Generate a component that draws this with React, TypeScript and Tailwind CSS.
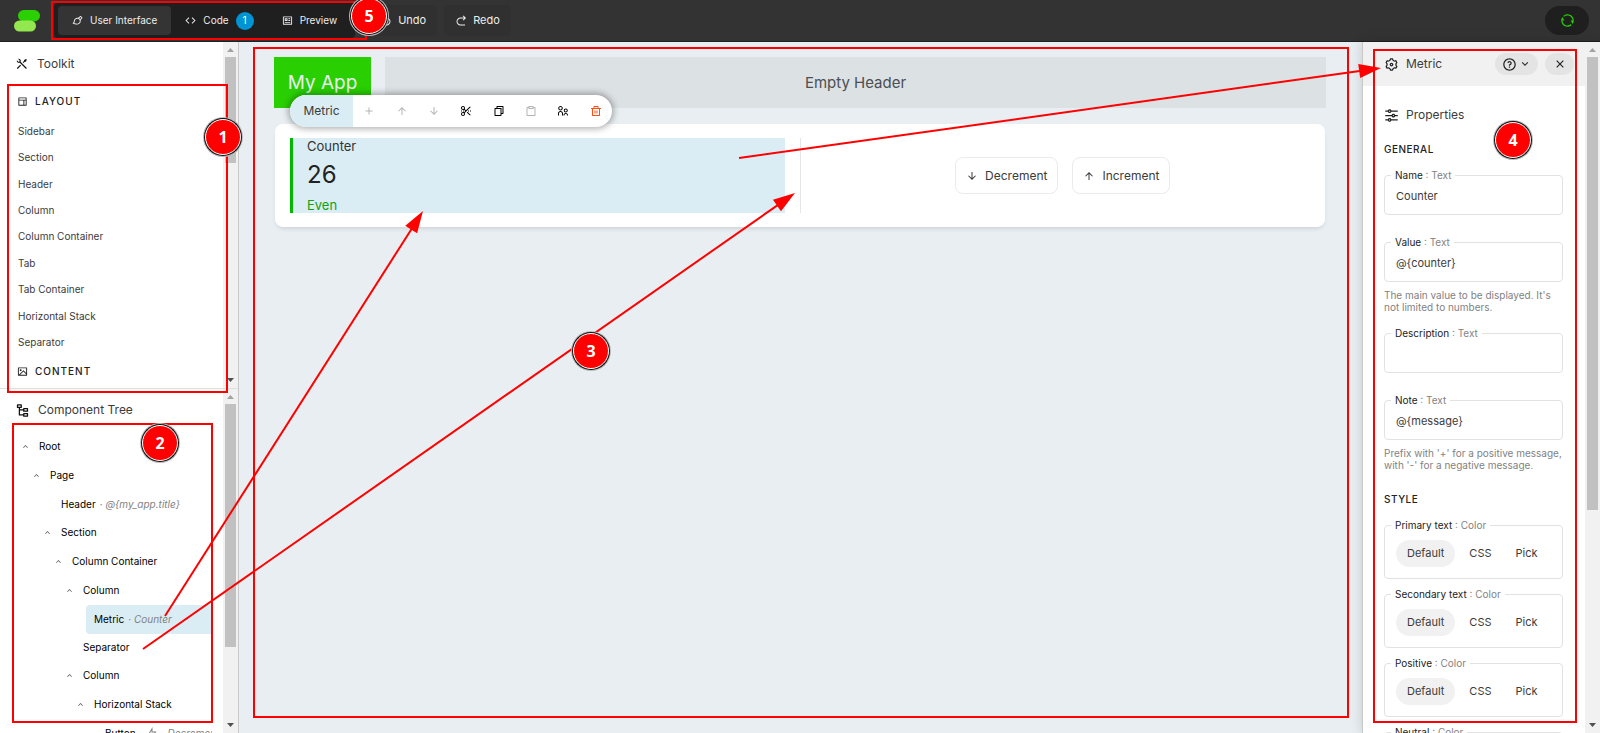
import React from "react";
import type { IconType } from "react-icons";
import {
  RiAddLine,
  RiArrowDownLine,
  RiArrowDownSLine,
  RiArrowGoBackLine,
  RiArrowGoForwardLine,
  RiArrowUpLine,
  RiArrowUpSLine,
  RiBrushLine,
  RiClipboardLine,
  RiCloseLine,
  RiCodeLine,
  RiDeleteBinLine,
  RiEqualizerLine,
  RiFileCopyLine,
  RiFlashlightLine,
  RiImageLine,
  RiLayoutLine,
  RiNodeTree,
  RiParentLine,
  RiProfileLine,
  RiQuestionLine,
  RiRefreshLine,
  RiScissorsCutLine,
  RiSettings3Line,
  RiToolsLine,
} from "react-icons/ri";

const layoutItems = [
  "Sidebar",
  "Section",
  "Header",
  "Column",
  "Column Container",
  "Tab",
  "Tab Container",
  "Horizontal Stack",
  "Separator",
];

type TreeNode = {
  name: string;
  level: number;
  detail?: string;
  leaf?: boolean;
  selected?: boolean;
  event?: boolean;
};

const tree: TreeNode[] = [
  { name: "Root", level: 0 },
  { name: "Page", level: 1 },
  { name: "Header", level: 2, leaf: true, detail: "@{my_app.title}" },
  { name: "Section", level: 2 },
  { name: "Column Container", level: 3 },
  { name: "Column", level: 4 },
  { name: "Metric", level: 5, leaf: true, detail: "Counter", selected: true },
  { name: "Separator", level: 4, leaf: true },
  { name: "Column", level: 4 },
  { name: "Horizontal Stack", level: 5 },
  { name: "Button", level: 6, leaf: true, detail: "Decrement", event: true },
];

function Scrollbar({ thumb }: { thumb: string }) {
  return (
    <div aria-hidden="true" className="flex w-[15px] shrink-0 flex-col items-center bg-[#f1f1f1]">
      <svg viewBox="0 0 15 15" className="size-[15px] shrink-0 fill-[#a3a3a3]">
        <path d="M4 10 7.5 6 11 10Z" />
      </svg>
      <div className="flex min-h-0 w-full flex-1 flex-col items-center">
        <div className={`w-[11px] bg-[#c1c1c1] ${thumb}`} />
      </div>
      <svg viewBox="0 0 15 15" className="size-[15px] shrink-0 fill-[#505050]">
        <path d="M4 5 7.5 9 11 5Z" />
      </svg>
    </div>
  );
}

function Logo() {
  return (
    <svg viewBox="0 0 27 22" className="h-[22px] w-[27px]" aria-label="Logo">
      <rect x="4" y="0" width="22" height="11.5" rx="5.75" fill="#2bd002" />
      <rect x="0" y="10.5" width="22" height="11" rx="5.5" fill="#94e84f" />
    </svg>
  );
}

function TopBar() {
  return (
    <header className="flex h-[42px] shrink-0 items-center border-b border-[#1f1f1f] bg-[#333333] pr-[11px] pl-3.5 text-[11px] text-[#ededed]">
      <Logo />
      <nav className="ml-[13px] flex h-[35px] items-center rounded bg-[#1f1f1f] px-1 text-[10px]">
        <button className="flex h-[29px] items-center gap-[7px] rounded bg-[#343434] px-3.5">
          <RiBrushLine size={11} /> User Interface
        </button>
        <button className="flex h-[29px] items-center gap-[7px] px-3.5">
          <RiCodeLine size={11} /> Code
          <span className="flex size-[18px] items-center justify-center rounded-full bg-[#0094d4] text-white">1</span>
        </button>
        <button className="flex h-[29px] items-center gap-[7px] px-3.5">
          <RiProfileLine size={11} /> Preview
        </button>
      </nav>
      <div className="ml-3.5 flex gap-[7px]">
        <button className="flex h-[31px] items-center gap-1.5 rounded bg-[#303030] px-[11px]">
          <RiArrowGoBackLine size={12} /> Undo
        </button>
        <button className="flex h-[31px] items-center gap-1.5 rounded bg-[#303030] px-[11px]">
          <RiArrowGoForwardLine size={12} /> Redo
        </button>
      </div>
      <button
        aria-label="Sync"
        className="ml-auto flex h-[29px] w-11 items-center justify-center rounded-full bg-[#1f1f1f] text-[#29cf00]"
      >
        <RiRefreshLine size={15} />
      </button>
    </header>
  );
}

function GroupTitle({ icon: Icon, children }: { icon: IconType; children: React.ReactNode }) {
  return (
    <h3 className="flex h-6 items-center gap-[7px] pl-[17px] text-[10px] font-medium tracking-widest text-[#222222]">
      <Icon size={11} /> {children}
    </h3>
  );
}

function Toolkit() {
  return (
    <section className="flex h-[347px] shrink-0 border-b border-[#e0e0e0]">
      <div className="min-w-0 flex-1 overflow-hidden">
        <h2 className="flex h-[47px] items-center gap-2 pb-1 pl-[15px] text-[12px] text-[#3b3b3b]">
          <RiToolsLine size={14} className="text-[#111111]" /> Toolkit
        </h2>
        <GroupTitle icon={RiLayoutLine}>LAYOUT</GroupTitle>
        <ul className="mt-[5px] grid h-[238px] auto-rows-fr text-[10px] text-[#3b3b3b]">
          {layoutItems.map((item) => (
            <li key={item} className="flex items-center pl-[18px]">
              {item}
            </li>
          ))}
        </ul>
        <div className="pt-[3px]">
          <GroupTitle icon={RiImageLine}>CONTENT</GroupTitle>
        </div>
      </div>
      <Scrollbar thumb="h-[106px]" />
    </section>
  );
}

function TreeRow({ node }: { node: TreeNode }) {
  return (
    <li
      className={`flex shrink-0 items-center ${node.leaf ? "h-7" : "h-[29px]"}`}
      style={{ paddingLeft: 19 + node.level * 11 }}
    >
      {!node.leaf && (
        <button aria-label={`Collapse ${node.name}`} className="flex w-5 shrink-0 pl-0.5 text-[#555555]">
          <RiArrowUpSLine size={9} />
        </button>
      )}
      <div
        className={`flex items-center gap-1 whitespace-nowrap ${
          node.selected ? "ml-3 h-[29px] flex-1 rounded-l bg-[#daedf5] pl-2" : node.leaf ? "pl-5" : ""
        }`}
      >
        <span className="text-black">{node.name}</span>
        {node.event && <RiFlashlightLine size={12} className="mx-1.5 shrink-0 text-[#828282]" />}
        {node.detail && (
          <span className="text-[#828282]">
            {!node.event && "· "}
            <em>{node.detail}</em>
          </span>
        )}
      </div>
    </li>
  );
}

function ComponentTree() {
  return (
    <section className="flex min-h-0 flex-1">
      <div className="min-w-0 flex-1 overflow-hidden pr-[11px]">
        <h2 className="flex h-[42px] items-center gap-2 pl-[15px] text-[12px] text-[#3b3b3b]">
          <RiNodeTree size={15} className="text-[#111111]" /> Component Tree
        </h2>
        <ul className="flex flex-col overflow-hidden pt-px text-[10px]">
          {tree.map((node, i) => (
            <TreeRow key={i} node={node} />
          ))}
        </ul>
      </div>
      <Scrollbar thumb="h-[243px]" />
    </section>
  );
}

const shortcuts: { label: string; icon: IconType; tone: string }[] = [
  { label: "Add child", icon: RiAddLine, tone: "text-[#b5b5b5]" },
  { label: "Move up", icon: RiArrowUpLine, tone: "text-[#b5b5b5]" },
  { label: "Move down", icon: RiArrowDownLine, tone: "text-[#b5b5b5]" },
  { label: "Cut", icon: RiScissorsCutLine, tone: "text-black" },
  { label: "Copy", icon: RiFileCopyLine, tone: "text-black" },
  { label: "Paste", icon: RiClipboardLine, tone: "text-[#b5b5b5]" },
  { label: "Go to parent", icon: RiParentLine, tone: "text-black" },
  { label: "Delete", icon: RiDeleteBinLine, tone: "text-[#ff4d12]" },
];

function ComponentToolbar() {
  return (
    <div className="absolute -top-[29px] left-[15px] flex h-8 w-[322px] items-stretch overflow-hidden rounded-full bg-white shadow-[0_0_6px_2px_rgba(0,0,0,0.3)]">
      <span className="flex w-[63px] items-center justify-center bg-[#daedf5] text-[12px] text-[#3b3b3b]">Metric</span>
      {shortcuts.map(({ label, icon: Icon, tone }) => (
        <button key={label} aria-label={label} className={`flex flex-1 items-center justify-center ${tone}`}>
          <Icon size={12} />
        </button>
      ))}
    </div>
  );
}

function Canvas() {
  return (
    <main className="min-w-0 flex-1 bg-[#e8eef1] pt-[15px] pr-9 pl-[35px]">
      <div className="flex h-[51px] gap-3.5">
        <div className="flex w-[97px] items-center justify-center bg-[#29cf00] pt-0.5 text-[19px] text-[#e8eef1]">
          My App
        </div>
        <div className="flex flex-1 items-center justify-center bg-[#dce1e4] pt-0.5 text-[15px] text-[#4b4f52]">
          Empty Header
        </div>
      </div>
      <section className="relative mt-4 mr-px ml-px grid grid-cols-[1fr_1px_1fr] gap-x-[15px] rounded-lg bg-white px-[15px] py-3.5 shadow-[0_3px_5px_-2px_rgba(0,0,0,0.15)]">
        <div className="h-[75px] border-l-[3px] border-[#00b800] bg-[#daedf5] pl-3.5 text-[13px] text-[#333333]">
          <div className="leading-[17px]">Counter</div>
          <div className="pt-1 pb-[7px] text-[24px] leading-[31px] text-[#222222]">26</div>
          <div className="leading-[17px] text-[#12a112]">Even</div>
        </div>
        <div className="bg-[#e6e6e6]" />
        <div className="flex items-center justify-center gap-3.5 text-[12px] text-[#3b3b3b]">
          <button className="flex h-[37px] items-center gap-[7px] rounded-lg border border-[#ebebeb] px-2.5">
            <RiArrowDownLine size={12} /> Decrement
          </button>
          <button className="flex h-[37px] items-center gap-[7px] rounded-lg border border-[#ebebeb] px-2.5">
            <RiArrowUpLine size={12} /> Increment
          </button>
        </div>
        <ComponentToolbar />
      </section>
    </main>
  );
}

function Legend({ name, type }: { name: string; type: string }) {
  return (
    <legend className="ml-1.5 px-1 text-[10px] leading-[14px] whitespace-nowrap text-[#222222]">
      {name} <span className="text-[#828282]">: {type}</span>
    </legend>
  );
}

function TextField({ name, value, hint }: { name: string; value: string; hint?: string }) {
  return (
    <div className={hint ? "mb-[13px]" : "mb-5"}>
      <fieldset className="h-[47px] rounded border border-[#e2e2e2]">
        <Legend name={name} type="Text" />
        <input
          aria-label={name}
          defaultValue={value}
          className="block h-7 w-full bg-transparent px-[11px] text-[#3b3b3b] outline-none"
        />
      </fieldset>
      {hint && <p className="pt-[7px] text-[10px] leading-3 text-[#828282]">{hint}</p>}
    </div>
  );
}

function ColorField({ name }: { name: string }) {
  return (
    <fieldset className="mb-2 h-[61px] rounded border border-[#e2e2e2]">
      <Legend name={name} type="Color" />
      <div className="flex pt-2 pl-[11px] text-[#3b3b3b]">
        <button className="h-[27px] rounded-full bg-[#f1f1f1] px-[11px]">Default</button>
        <button className="h-[27px] px-3.5">CSS</button>
        <button className="h-[27px] px-2.5">Pick</button>
      </div>
    </fieldset>
  );
}

function SectionTitle({ children }: { children: React.ReactNode }) {
  return <h3 className="pb-[11px] text-[10px] leading-4 font-medium tracking-wider text-[#222222]">{children}</h3>;
}

function Settings() {
  return (
    <aside className="z-10 flex w-[238px] shrink-0 border-l border-[#c8c8c8] bg-white shadow-[0_0_12px_rgba(0,0,0,0.15)]">
      <div className="flex min-w-0 flex-1 flex-col overflow-hidden">
        <div className="flex h-11 shrink-0 items-center bg-[#f1f1f1] pr-[11px] pl-[21px] text-[12px] text-[#3b3b3b]">
          <RiSettings3Line size={15} className="text-[#222222]" />
          <span className="pl-[7px]">Metric</span>
          <button
            aria-label="Help"
            className="ml-auto flex h-[22px] w-[43px] items-center justify-center gap-0.5 rounded-full bg-[#e4e4e4] text-[#222222]"
          >
            <RiQuestionLine size={15} />
            <RiArrowDownSLine size={12} />
          </button>
          <button
            aria-label="Close"
            className="ml-[7px] flex h-[22px] w-[29px] items-center justify-center rounded-full bg-[#e4e4e4] text-[#222222]"
          >
            <RiCloseLine size={14} />
          </button>
        </div>
        <div className="shrink-0 pt-5 pr-[22px] pl-[21px] text-[11px]">
          <h2 className="mb-[17px] flex h-[18px] items-center gap-[7px] text-[12px] text-[#3b3b3b]">
            <RiEqualizerLine size={15} className="text-[#222222]" /> Properties
          </h2>
          <SectionTitle>GENERAL</SectionTitle>
          <TextField name="Name" value="Counter" />
          <TextField
            name="Value"
            value="@{counter}"
            hint="The main value to be displayed. It's not limited to numbers."
          />
          <TextField name="Description" value="" />
          <div className="mb-5">
            <TextField
              name="Note"
              value="@{message}"
              hint="Prefix with '+' for a positive message, with '-' for a negative message."
            />
          </div>
          <SectionTitle>STYLE</SectionTitle>
          <ColorField name="Primary text" />
          <ColorField name="Secondary text" />
          <ColorField name="Positive" />
          <ColorField name="Neutral" />
        </div>
      </div>
      <Scrollbar thumb="h-[453px]" />
    </aside>
  );
}

const arrows: [number, number, number, number][] = [
  [165, 616, 423, 211],
  [143, 649, 795, 193],
  [739, 158, 1381, 68],
];

function Arrow({ points: [x1, y1, x2, y2] }: { points: [number, number, number, number] }) {
  const angle = (Math.atan2(y2 - y1, x2 - x1) * 180) / Math.PI;
  const length = Math.hypot(x2 - x1, y2 - y1);
  return (
    <g transform={`translate(${x1} ${y1}) rotate(${angle})`}>
      <path d={`M0 0H${length - 18}`} stroke="#ff0000" strokeWidth="2" />
      <path d={`M${length} 0l-22 -7v14Z`} fill="#ff0000" />
    </g>
  );
}

function Badge({ place, children }: { place: string; children: React.ReactNode }) {
  return (
    <span
      className={`absolute flex size-9 items-center justify-center rounded-full border border-white bg-[#ff0000] font-['Noto_Sans',sans-serif] text-[16px] font-bold text-white shadow-[0_0_0_1px_#111111,0_0_0_2px_#bbbbbb] ${place}`}
    >
      {children}
    </span>
  );
}

function Annotations() {
  const box = "absolute border-2 border-[#ff0000]";
  return (
    <div className="pointer-events-none absolute inset-0 z-20 overflow-hidden">
      <div className={`${box} top-[84px] left-[7px] h-[309px] w-[221px]`} />
      <div className={`${box} top-[423px] left-[12px] h-[300px] w-[201px]`} />
      <div className={`${box} top-[47px] left-[253px] h-[671px] w-[1096px]`} />
      <div className={`${box} top-[49px] left-[1373px] h-[674px] w-[204px]`} />
      <div className={`${box} top-[1px] left-[51px] h-[39px] w-[316px]`} />
      <svg className="absolute inset-0 size-full" fill="none">
        {arrows.map((points, i) => (
          <Arrow key={i} points={points} />
        ))}
      </svg>
      <Badge place="top-[119px] left-[205px]">1</Badge>
      <Badge place="top-[425px] left-[142px]">2</Badge>
      <Badge place="top-[333px] left-[573px]">3</Badge>
      <Badge place="top-[122px] left-[1495px]">4</Badge>
      <Badge place="-top-[2px] left-[351px]">5</Badge>
    </div>
  );
}

export default function App() {
  return (
    <div className="relative flex h-screen flex-col overflow-hidden font-['Inter',sans-serif]">
      <TopBar />
      <div className="flex min-h-0 flex-1">
        <aside className="flex w-[239px] shrink-0 flex-col border-r border-[#c8c8c8] bg-white">
          <Toolkit />
          <ComponentTree />
        </aside>
        <Canvas />
        <Settings />
      </div>
      <Annotations />
    </div>
  );
}
